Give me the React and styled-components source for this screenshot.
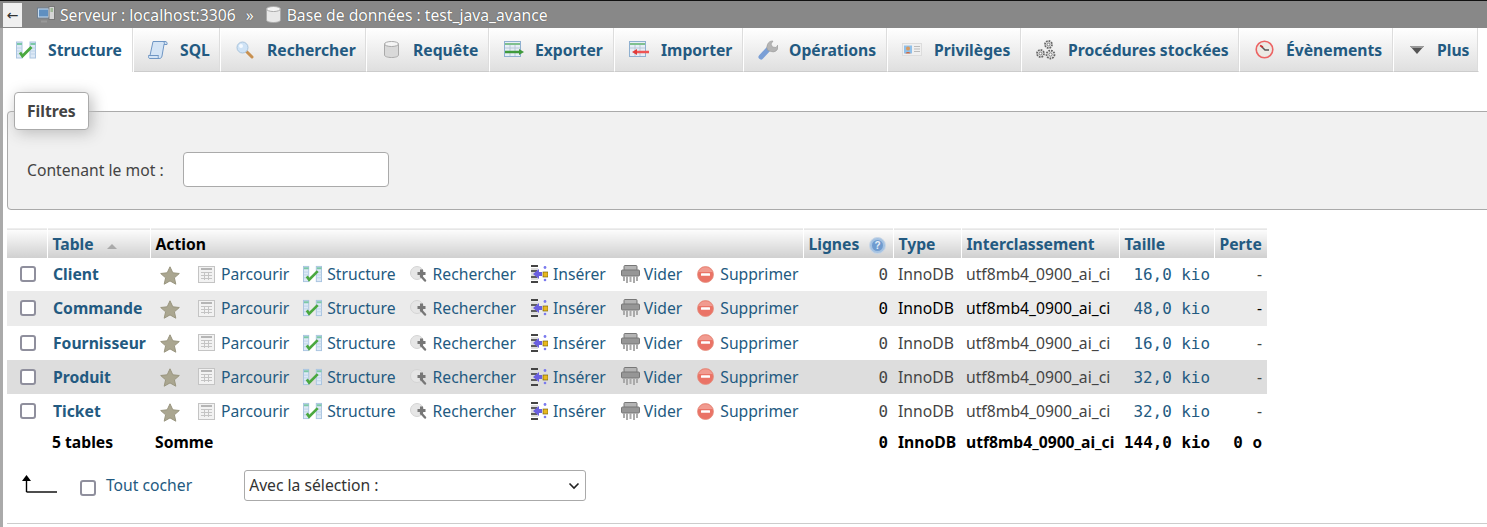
import React from 'react';
import styled, { createGlobalStyle } from 'styled-components';

const Global = createGlobalStyle`
  html, body { margin: 0; padding: 0; background: #fff; overflow: hidden; }
  body { font-family: "Noto Sans", "Open Sans", sans-serif; font-size: 15.7px; color: #444; }
`;
const Page = styled.div`width: 1487px; height: 527px; overflow: hidden; display: flex; flex-direction: column;`;
const Crumbs = styled.div`
  height: 27px; background: #888; border-top: 1px solid #111; display: flex; align-items: center;
  color: #fff; font-size: 15.7px; text-shadow: 0 0 1px #333; padding-left: 3px; flex: none;
`;
const Toggle = styled.div`
  width: 19px; height: 24px; background: #f0f0f0; color: #333; display: flex; align-items: center; justify-content: center;
  font-size: 14px; margin-right: 15px; text-shadow: none; font-family: "DejaVu Sans", sans-serif;
`;
const Crumb = styled.span`display: flex; align-items: center; gap: ${p => p.$gap}px;`;
const Sep = styled.span`margin: 0 12px 0 10px;`;
const Main = styled.div`flex: 1; border-left: 3px solid #aaa; display: flex; flex-direction: column; min-height: 0;`;
const Tabs = styled.nav`display: flex; height: 44px; flex: none;`;
const Tab = styled.a`
  display: flex; align-items: center; gap: 11px; padding: 0 10px 0 13px; font-weight: 700; color: #235a81;
  border-right: 1px solid #fff; box-shadow: inset -1px 0 0 #ddd; white-space: nowrap; flex: none; width: ${p => p.$w}px; box-sizing: border-box;
  background: ${p => p.$active ? '#fff' : 'linear-gradient(#fff, #dfdfdf)'};
  border-bottom: ${p => p.$active ? '0' : '1px solid #ccc'};
  &:first-child { padding-left: 12px; }
`;
const TabIcon = styled.span`width: ${p => p.$w}px; height: 22px; display: flex; align-items: center; justify-content: center; flex: none;`;
const Fieldset = styled.fieldset`
  margin: 20px 0 0 4px; padding: 4px 19px 0; width: 1600px; height: 118px; box-sizing: border-box; background: #f1f1f1;
  border: 1px solid #aaa; border-radius: 4px 0 0 4px; flex: none; min-inline-size: auto;
`;
const Legend = styled.legend`
  margin-left: -13px; padding: 0 12px; height: 38px; box-sizing: border-box; line-height: 36px; font-weight: 700; background: #fff; color: #444;
  border: 1px solid #aaa; border-radius: 4px; box-shadow: 3px 3px 15px #bbb;
`;
const FilterRow = styled.div`display: flex; align-items: center; gap: 19px; margin-top: 18px;`;
const TextInput = styled.input`width: 206px; height: 35px; box-sizing: border-box; border: 1px solid #aaa; border-radius: 4px; background: #fff;`;
const Table = styled.table`
  margin: 18px 0 0 4px; border-collapse: collapse; table-layout: fixed; width: 1260px; flex: none;
`;
const HeadCell = styled.th`
  height: 29px; padding: 2px 5px 0; box-sizing: border-box; text-align: left; font-weight: 700; white-space: nowrap; color: ${p => p.$dark ? '#000' : '#235a81'};
  background: linear-gradient(#fdfdfd, #cfcfcf); border-right: 1px solid #fff; border-top: 1px solid #eee;
`;
const SortArrow = styled.span`display: inline-block; margin-left: 13px; width: 0; height: 0; border: 5px solid transparent; border-top: 0; border-bottom: 5px solid #aaa; vertical-align: 1px;`;
const Row = styled.tr`background: ${p => p.$bg};`;
const Cell = styled.td`
  padding: 0 ${p => p.$pr ?? 5}px 0 5px; height: ${p => p.$h}px; box-sizing: border-box; white-space: nowrap; overflow: visible;
  color: ${p => p.$c || '#444'}; text-align: ${p => p.$right ? 'right' : 'left'};
`;
const Mono = styled.span`font-family: "DejaVu Sans Mono", monospace; font-size: 15.9px; color: ${p => p.$c || 'inherit'};`;
const TableName = styled.a`color: #235a81; font-weight: 700; margin-left: 1px;`;
const Strong = styled.b`color: #000; font-weight: 700;`;
const Check = styled.input.attrs({ type: 'checkbox' })`
  appearance: none; -webkit-appearance: none; width: 16px; height: 16px; margin: 0; border: 2px solid #8f8f9d; border-radius: 3px; background: #fff; box-sizing: border-box; display: block;
`;
const CheckWrap = styled.div`display: flex; padding-left: 8px;`;
const Actions = styled.div`display: flex; align-items: center; padding-left: 5px;`;
const Action = styled.a`display: flex; align-items: center; gap: ${p => p.$gap ?? 5}px; margin-right: ${p => p.$mr ?? 14}px; color: #235a81;`;
const Star = styled.span`display: flex; margin-right: 18px; margin-top: 2px;`;
const Bottom = styled.div`display: flex; align-items: center; height: 31px; margin-top: 15px; padding-left: 19px; flex: none;`;
const AllCheck = styled.div`display: flex; margin-left: 23px; margin-top: 6px;`;
const AllLabel = styled.a`color: #235a81; margin-left: 10px; margin-right: 52px;`;
const SelectWrap = styled.div`position: relative; width: 342px; height: 31px;`;
const Select = styled.select`
  appearance: none; -webkit-appearance: none; width: 100%; height: 100%; box-sizing: border-box; border: 1px solid #aaa; border-radius: 3px; background: #fff; color: #333;
  font-family: "Noto Sans", sans-serif; font-size: 15.7px; padding: 0 4px;
`;
const Chevron = styled.svg`position: absolute; right: 6px; top: 12px; pointer-events: none;`;
const ReturnIcon = styled.svg`margin-bottom: 2px; flex: none;`;
const Rule = styled.hr`margin: 22px 0 0 4px; border: 0; border-top: 1px solid #ccc; width: 1600px; flex: none;`;
const HelpSlot = styled.span`display: inline-block; margin-left: 6px; line-height: 0; height: 0; vertical-align: -4px;`;

const IStructure = () => (
  <svg width="20" height="18" viewBox="0 0 20 18">
    <rect x=".5" y="1" width="5.500" height="16" fill="#dde9f6" stroke="#a9c4e0" />
    <rect x="14" y="1" width="5.500" height="16" fill="#dde9f6" stroke="#a9c4e0" />
    <path d="M1 3h5M14.500 3h5" stroke="#7cc8a8" strokeWidth="2" />
    <path d="M1 7h5M1 10h5M1 13h5M14.500 7h5M14.500 10h5M14.500 13h5" stroke="#bdd3e8" />
    <path d="M4 11.500l2.500 3.500 9-9" fill="none" stroke="#4aa83f" strokeWidth="2.800" />
  </svg>
);
const ISql = () => (
  <svg width="20" height="20" viewBox="0 0 20 20">
    <path d="M5 1.500h12c1.700 0 2.500 1.200 2 3h-3L14 16c-.3 1.600-1.200 2.500-2.500 2.500H2C.5 18.500.2 17.200.7 15.500H2z" fill="#d4e4f5" stroke="#6f96c4" />
    <path d="M.7 15.500h9.800c-.5 1.500-.4 3 1 3" fill="none" stroke="#6f96c4" />
    <path d="M15.500 2c1.200 0 1.200 1.500.5 2.500" fill="none" stroke="#6f96c4" />
  </svg>
);
const ISearch = () => (
  <svg width="18" height="18" viewBox="0 0 18 18">
    <path d="M10 10l6 6" stroke="#c89050" strokeWidth="3" strokeLinecap="round" />
    <circle cx="6.500" cy="6.500" r="5.500" fill="#cfe3f6" stroke="#a9c4dc" />
    <circle cx="5" cy="5" r="2" fill="#f4faff" />
  </svg>
);
const IDb = ({ c = '#d9d9d9' }) => (
  <svg width="15" height="17" viewBox="0 0 15 17">
    <path d="M.5 3v11c0 1.500 3 2.500 7 2.500s7-1 7-2.500V3z" fill={c} stroke="#aaa" />
    <ellipse cx="7.500" cy="3" rx="7" ry="2.500" fill="#f5f5f5" stroke="#aaa" />
  </svg>
);
const IExport = () => (
  <svg width="20" height="17" viewBox="0 0 20 17">
    <rect x=".5" y=".5" width="16" height="15" fill="#e6eef7" stroke="#8fb0d0" />
    <path d="M1 3h15" stroke="#7fc08f" strokeWidth="2" />
    <path d="M1 7h15M6 4v11M11 4v11" stroke="#b8c8d8" />
    <path d="M1 11h15" stroke="#3f9a3c" strokeWidth="2.500" />
    <path d="M15 8l5 3-5 3z" fill="#3f9a3c" />
  </svg>
);
const IImport = () => (
  <svg width="20" height="17" viewBox="0 0 20 17">
    <rect x=".5" y=".5" width="16" height="15" fill="#e6eef7" stroke="#8fb0d0" />
    <path d="M1 3h15" stroke="#7fc08f" strokeWidth="2" />
    <path d="M1 7h15M6 4v11M11 4v11" stroke="#b8c8d8" />
    <path d="M6 11h14" stroke="#ee5555" strokeWidth="2.500" />
    <path d="M8 8l-5 3 5 3z" fill="#e03a3a" />
  </svg>
);
const IWrench = () => (
  <svg width="20" height="20" viewBox="0 0 20 20">
    <path d="M3 17l7-7.500" stroke="#7a9fd6" strokeWidth="5" strokeLinecap="round" />
    <path d="M10 10.500a5.500 5.500 0 0 1-.5-6 5.500 5.500 0 0 1 5.500-3.500l-2 3 1.500 3 3.500.5 2-2.500a5.500 5.500 0 0 1-2 6 5.500 5.500 0 0 1-5 .5z" fill="#b4b4b4" stroke="#999" strokeWidth=".6" />
  </svg>
);
const IPriv = () => (
  <svg width="20" height="14" viewBox="0 0 20 14">
    <rect x=".5" y=".5" width="19" height="12" fill="#f0f0f0" stroke="#ddd" />
    <rect x="2" y="2.500" width="8" height="8" fill="#8fc0ea" />
    <circle cx="6" cy="5.500" r="2" fill="#d89a60" />
    <path d="M3.500 10.500c0-2 5-2 5 0z" fill="#d06a40" />
    <path d="M12 3.500h6M12 6h6M12 8.500h6" stroke="#bbb" />
  </svg>
);
const Gear = ({ cx, cy, r }) => (
  <g>
    <circle cx={cx} cy={cy} r={r} fill="#e4e4e4" stroke="#666" strokeDasharray="1.700 1" strokeWidth="1.800" />
    <circle cx={cx} cy={cy} r={r * .4} fill="#fff" stroke="#666" strokeWidth=".8" />
  </g>
);
const IGears = () => (
  <svg width="20" height="20" viewBox="0 0 20 20">
    <Gear cx={12.500} cy={4.500} r={3.500} />
    <Gear cx={4.500} cy={13.500} r={3.500} />
    <Gear cx={14.500} cy={14.500} r={4} />
  </svg>
);
const IClock = () => (
  <svg width="19" height="19" viewBox="0 0 19 19">
    <circle cx="9.500" cy="9.500" r="8.300" fill="#eceae4" stroke="#ec6464" strokeWidth="1.600" />
    <path d="M6 6l4 4 4 0" fill="none" stroke="#555" strokeWidth="1.500" />
    <path d="M5 5.500l3 1.500" stroke="#d03030" strokeWidth="1.500" />
  </svg>
);
const IPlus = () => (
  <svg width="14" height="8" viewBox="0 0 14 8"><path d="M0 0h14L7 8z" fill="#555" /><path d="M0 0h14l-1.500 2h-11z" fill="#999" /></svg>
);
const IStar = () => (
  <svg width="20" height="19" viewBox="0 0 20 19">
    <path d="M10 .8l2.800 6 6.500.7-4.900 4.300 1.400 6.400L10 14.900l-5.800 3.300 1.400-6.400L.7 7.500l6.500-.7z" fill="#aaa690" stroke="#99957f" strokeWidth="1" strokeLinejoin="round" />
  </svg>
);
const IBrowse = () => (
  <svg width="17" height="17" viewBox="0 0 17 17">
    <rect x=".5" y=".5" width="16" height="16" fill="#f2f2f2" stroke="#c4c4c4" />
    <path d="M3 3h11" stroke="#b5b5b5" strokeWidth="2" />
    <path d="M3 6.500h11M3 9.500h11M3 12.500h11M6.500 6v8M10.500 6v8" stroke="#c4c4c4" />
  </svg>
);
const IRowStructure = () => (
  <svg width="19" height="18" viewBox="0 0 20 18">
    <rect x=".5" y="1" width="5.500" height="16" fill="#dde9f6" stroke="#a9c4e0" />
    <rect x="14" y="1" width="5.500" height="16" fill="#dde9f6" stroke="#a9c4e0" />
    <path d="M1 3h5M14.500 3h5" stroke="#7cc8a8" strokeWidth="2" />
    <path d="M1 7h5M1 10h5M1 13h5M14.500 7h5M14.500 10h5M14.500 13h5" stroke="#bdd3e8" />
    <path d="M4 11.500l2.500 3.500 9-9" fill="none" stroke="#4aa83f" strokeWidth="2.800" />
  </svg>
);
const IRowSearch = () => (
  <svg width="18" height="16" viewBox="0 0 18 16">
    <circle cx="7" cy="7" r="6.500" fill="#e6e6e6" stroke="#d4d4d4" />
    <path d="M11 10l4 4.500" stroke="#777" strokeWidth="2.400" strokeLinecap="round" />
    <path d="M11.500 3.500v8M7.500 7.500h8" stroke="#777" strokeWidth="3" />
  </svg>
);
const IInsert = () => (
  <svg width="17" height="18" viewBox="0 0 17 18">
    <path d="M0 1h7M0 17h7" stroke="#444" strokeWidth="2" />
    <rect x="0" y="3" width="7" height="12" fill="#ddd" />
    <path d="M0 6h6M0 12h6" stroke="#333" strokeWidth="1.500" />
    <path d="M2 9l6-5v3h3v4H8v3z" fill="#6a5fe0" />
    <circle cx="14" cy="2.500" r="1.400" fill="#7a7aee" />
    <rect x="12" y="7" width="5" height="5" fill="#e8b820" stroke="#665500" strokeWidth=".6" />
    <circle cx="14" cy="15" r="1.300" fill="#7a7aee" />
  </svg>
);
const IEmpty = () => (
  <svg width="19" height="19" viewBox="0 0 19 19">
    <rect x="3" y=".5" width="13" height="5" rx="1" fill="#b4b4b4" stroke="#777" />
    <rect x=".5" y="5" width="18" height="6" rx="1" fill="#969696" stroke="#777" />
    <path d="M3 11v5M6 11v7M9.500 11v6M13 11v7M16 11v5" stroke="#aaa" strokeWidth="2" />
  </svg>
);
const IDrop = () => (
  <svg width="17" height="17" viewBox="0 0 17 17">
    <circle cx="8.500" cy="8.500" r="8" fill="#ea7366" stroke="#e59080" strokeWidth=".8" />
    <path d="M1.500 6a7.500 7.500 0 0 1 14 0z" fill="#f4aca2" opacity=".7" />
    <rect x="4" y="7.200" width="9" height="2.600" fill="#fff" rx=".5" />
  </svg>
);
const IHelp = () => (
  <svg width="17" height="17" viewBox="0 0 17 17">
    <circle cx="8.500" cy="8.500" r="8" fill="#a4c2e2" stroke="#c8d6e6" />
    <circle cx="8.500" cy="8.500" r="5.500" fill="#6f9bcf" />
    <text x="8.500" y="12" textAnchor="middle" fontSize="10" fontWeight="700" fill="#e8f0f8" fontFamily="Liberation Sans">?</text>
  </svg>
);
const IServer = () => (
  <svg width="18" height="17" viewBox="0 0 18 17">
    <rect x=".5" y="2" width="12" height="10" fill="#c8dcf0" stroke="#6f7f90" />
    <rect x="2" y="3.500" width="9" height="7" fill="#5f8fc0" />
    <rect x="12" y=".5" width="5.500" height="13" fill="#d5d5d5" stroke="#777" />
    <path d="M13.500 3h2.500M13.500 5h2.500" stroke="#6b9b5b" />
    <path d="M4 15.500h6" stroke="#999" strokeWidth="2" />
  </svg>
);
const IReturn = () => (
  <ReturnIcon width="35" height="18" viewBox="0 0 35 18">
    <path d="M4.500 17V3" stroke="#000" strokeWidth="1.400" fill="none" />
    <path d="M4.500 17H35" stroke="#000" strokeWidth="1.400" />
    <path d="M0 6l4.500-6L9 6z" fill="#000" />
  </ReturnIcon>
);

const tabs = [
  ['Structure', <IStructure />, 131, 22],
  ['SQL', <ISql />, 87, 22],
  ['Rechercher', <ISearch />, 146, 22],
  ['Requête', <IDb />, 123, 22],
  ['Exporter', <IExport />, 125, 21],
  ['Importer', <IImport />, 129, 22],
  ['Opérations', <IWrench />, 144, 21],
  ['Privilèges', <IPriv />, 134, 22],
  ['Procédures stockées', <IGears />, 218, 22],
  ['Évènements', <IClock />, 154, 22],
  ['Plus', <IPlus />, 85, 19],
];
const rows = [
  ['Client', '16,0', 33, '#fff', '#444'],
  ['Commande', '48,0', 35, '#ebebeb', '#000'],
  ['Fournisseur', '16,0', 34, '#fff', '#444'],
  ['Produit', '32,0', 34, '#ddd', '#444'],
  ['Ticket', '32,0', 35, '#fff', '#444'],
];
const widths = [40, 103, 653, 90, 68, 158, 95, 53];

export default function App() {
  return (
    <Page>
      <Global />
      <Crumbs>
        <Toggle>←</Toggle>
        <Crumb $gap={5}><IServer />Serveur : localhost:3306</Crumb>
        <Sep>»</Sep>
        <Crumb $gap={6}><IDb c="#e8e8e8" />Base de données : test_java_avance</Crumb>
      </Crumbs>
      <Main>
        <Tabs>
          {tabs.map(([label, icon, w, iw], i) => (
            <Tab key={label} $active={i === 0} $w={w}><TabIcon $w={iw}>{icon}</TabIcon>{label}</Tab>
          ))}
        </Tabs>
        <Fieldset>
          <Legend>Filtres</Legend>
          <FilterRow>Contenant le mot :<TextInput /></FilterRow>
        </Fieldset>
        <Table>
          <colgroup>{widths.map((w, i) => <col key={i} style={{ width: w }} />)}</colgroup>
          <thead>
            <tr>
              <HeadCell />
              <HeadCell>Table<SortArrow /></HeadCell>
              <HeadCell $dark>Action</HeadCell>
              <HeadCell>Lignes <HelpSlot><IHelp /></HelpSlot></HeadCell>
              <HeadCell>Type</HeadCell>
              <HeadCell>Interclassement</HeadCell>
              <HeadCell>Taille</HeadCell>
              <HeadCell>Perte</HeadCell>
            </tr>
          </thead>
          <tbody>
            {rows.map(([name, size, h, bg, c]) => (
              <Row key={name} $bg={bg}>
                <Cell $h={h}><CheckWrap><Check /></CheckWrap></Cell>
                <Cell $h={h}><TableName>{name}</TableName></Cell>
                <Cell $h={h}>
                  <Actions>
                    <Star><IStar /></Star>
                    <Action $gap={6}><IBrowse />Parcourir</Action>
                    <Action><IRowStructure />Structure</Action>
                    <Action $mr={15}><IRowSearch />Rechercher</Action>
                    <Action $mr={15}><IInsert />Insérer</Action>
                    <Action $gap={4} $mr={15}><IEmpty />Vider</Action>
                    <Action $gap={6}><IDrop />Supprimer</Action>
                  </Actions>
                </Cell>
                <Cell $h={h} $right $c={c}><Mono>0</Mono></Cell>
                <Cell $h={h} $c={c}>InnoDB</Cell>
                <Cell $h={h} $c={c}>utf8mb4_0900_ai_ci</Cell>
                <Cell $h={h} $right $pr={4}><Mono $c="#235a81">{size} kio</Mono></Cell>
                <Cell $h={h} $right $c={c}>-</Cell>
              </Row>
            ))}
            <tr>
              <Cell $h={26} />
              <Cell $h={26}><Strong>5 tables</Strong></Cell>
              <Cell $h={26}><Strong>Somme</Strong></Cell>
              <Cell $h={26} $right><Strong><Mono>0</Mono></Strong></Cell>
              <Cell $h={26}><Strong>InnoDB</Strong></Cell>
              <Cell $h={26}><Strong>utf8mb4_0900_ai_ci</Strong></Cell>
              <Cell $h={26} $right $pr={6}><Strong><Mono>144,0 kio</Mono></Strong></Cell>
              <Cell $h={26} $right><Strong><Mono>0 o</Mono></Strong></Cell>
            </tr>
          </tbody>
        </Table>
        <Bottom>
          <IReturn />
          <AllCheck><Check /></AllCheck>
          <AllLabel>Tout cocher</AllLabel>
          <SelectWrap>
            <Select defaultValue="a"><option value="a">Avec la sélection :</option></Select>
            <Chevron width="12" height="8" viewBox="0 0 12 8"><path d="M1.500 1.500L6 6l4.500-4.500" fill="none" stroke="#222" strokeWidth="1.600" /></Chevron>
          </SelectWrap>
        </Bottom>
        <Rule />
      </Main>
    </Page>
  );
}
